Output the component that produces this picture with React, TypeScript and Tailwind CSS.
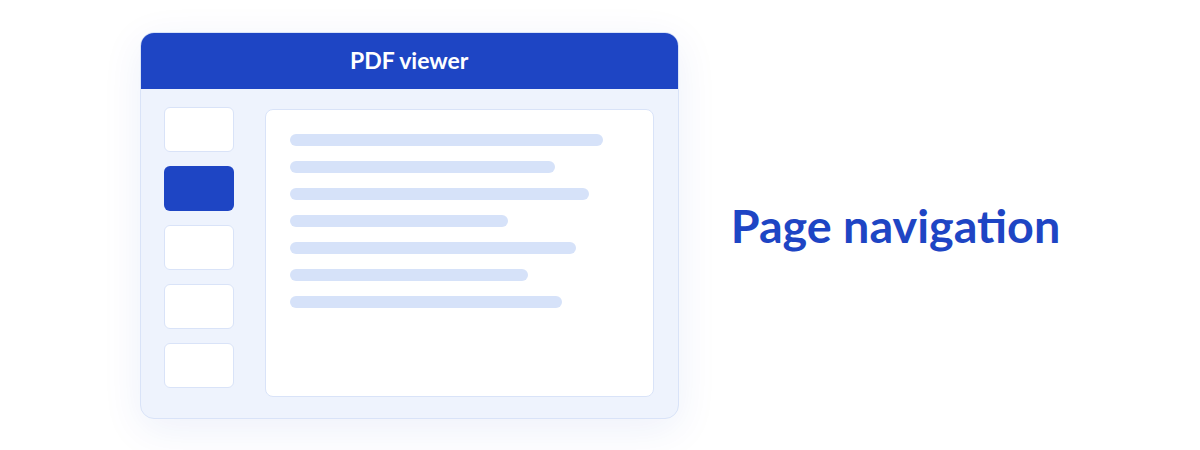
import React from "react";

const bars = [313, 265, 299, 218, 286, 238, 272];
const thumbs = [false, true, false, false, false];

const App: React.FC = () => {
    return (
        <div className="w-[1200px] h-[450px] bg-white flex items-center justify-center gap-[52px]" style={{ fontFamily: '"Lato", "Open Sans", sans-serif' }}>
            <div className="w-[539px] h-[387px] rounded-[14px] border border-[#d9e3f8] bg-[#eef3fd] shadow-[0_10px_40px_rgba(30,69,196,0.08)] overflow-hidden flex flex-col">
                <div className="h-[56px] bg-[#1e45c4] flex items-center justify-center">
                    <h2 className="text-white font-bold text-[23px]">PDF viewer</h2>
                </div>
                <div className="flex-1 flex pl-[23px] pr-[24px] pt-[18px] pb-[21px] gap-[31px]">
                    <div className="flex flex-col gap-[14px]">
                        {thumbs.map((active, i) => (
                            <div
                                key={i}
                                className={active
                                    ? "w-[70px] h-[45px] rounded-[6px] bg-[#1e45c4]"
                                    : "w-[70px] h-[45px] rounded-[6px] bg-white border border-[#d9e3f8]"}
                            />
                        ))}
                    </div>
                    <div className="flex-1 mt-[2px] rounded-[8px] bg-white border border-[#d9e3f8] pl-[24px] pt-[24px] flex flex-col gap-[15px]">
                        {bars.map((w, i) => (
                            <div key={i} className="h-[12px] rounded-full bg-[#d6e2f9]" style={{ width: w }} />
                        ))}
                    </div>
                </div>
            </div>
            <h1 className="text-[#1e45c4] font-bold text-[46.7px] leading-none">Page navigation</h1>
        </div>
    );
};

export default App;
